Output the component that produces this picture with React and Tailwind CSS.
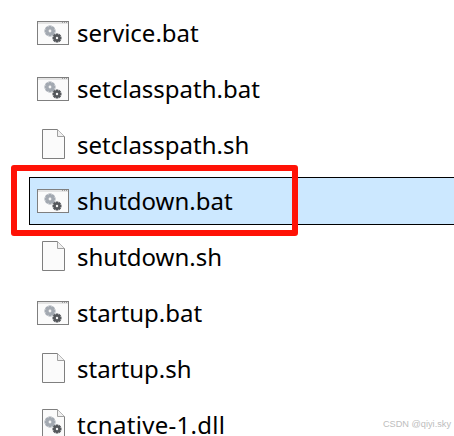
import React from 'react';

const Gear = ({ cx, cy, r, hole, teeth = 8, fill }) => {
  const bars = [];
  for (let i = 0; i < teeth / 2; i++) {
    bars.push(
      <rect
        key={i}
        x={cx - r * 0.3}
        y={cy - r}
        width={r * 0.6}
        height={r * 2}
        fill={fill}
        transform={`rotate(${(i * 360) / teeth} ${cx} ${cy})`}
      />
    );
  }
  return (
    <g>
      {bars}
      <circle cx={cx} cy={cy} r={r * 0.72} fill={fill} />
      <circle cx={cx} cy={cy} r={hole} fill="#f4f4f4" />
    </g>
  );
};

const AppIcon = () => (
  <svg width="32" height="24" viewBox="0 0 32 24" className="shrink-0">
    <rect x="0.5" y="0.5" width="31" height="23" fill="#fbfbfb" stroke="#7f7f7f" />
    <rect x="1" y="1" width="30" height="2" fill="#e4e4e4" />
    <rect x="25" y="1" width="1" height="1" fill="#9a9a9a" />
    <rect x="27" y="1" width="1" height="1" fill="#9a9a9a" />
    <rect x="29" y="1" width="1" height="1" fill="#9a9a9a" />
    <Gear cx={13} cy={10} r={5.5} hole={1.4} fill="#a3a9b1" />
    <Gear cx={20} cy={17} r={4.5} hole={1.2} fill="#55585c" />
  </svg>
);

const DocIcon = ({ gears }) => (
  <svg width="23" height="30" viewBox="0 0 23 30" className="ml-[5px] mb-[2px] shrink-0">
    <path d="M0.5 0.5H15.5L22.5 7.5V29.5H0.5Z" fill="#fbfbfb" stroke="#7f7f7f" />
    <path d="M15.5 0.5V7.5H22.5" fill="#f0f0f0" stroke="#a0a0a0" />
    {gears && <Gear cx={8} cy={13} r={5.5} hole={1.4} fill="#a3a9b1" />}
    {gears && <Gear cx={15} cy={20} r={4.5} hole={1.2} fill="#55585c" />}
  </svg>
);

const files = [
  { name: 'service.bat', icon: 'app' },
  { name: 'setclasspath.bat', icon: 'app' },
  { name: 'setclasspath.sh', icon: 'doc' },
  { name: 'shutdown.bat', icon: 'app', selected: true },
  { name: 'shutdown.sh', icon: 'doc' },
  { name: 'startup.bat', icon: 'app' },
  { name: 'startup.sh', icon: 'doc' },
  { name: 'tcnative-1.dll', icon: 'dll' },
];

const App = () => {
  return (
    <div className="relative h-[436px] w-[454px] overflow-hidden bg-white font-['Noto_Sans',sans-serif]">
      <div className="flex flex-col gap-2 pl-[29px] pt-[9px]">
        {files.map((f) => (
          <div
            key={f.name}
            className={`flex h-12 shrink-0 items-center border-y border-l pl-[7px] ${
              f.selected ? 'border-black bg-[#cce8ff]' : 'border-transparent'
            }`}
          >
            <div className="flex w-[32px] shrink-0 items-center">
              {f.icon === 'app' && <AppIcon />}
              {f.icon === 'doc' && <DocIcon />}
              {f.icon === 'dll' && <DocIcon gears />}
            </div>
            <span
              className={`ml-2 text-2xl leading-none text-black ${
                f.icon === 'dll' ? 'tracking-[0.3px]' : ''
              }`}
            >
              {f.name}
            </span>
          </div>
        ))}
      </div>
      <div className="absolute left-[11px] top-[165px] h-[71px] w-[287px] rounded-[3px] border-[6px] border-[#ff1206]" />
      <span className="absolute right-[3px] top-[420px] font-['Liberation_Sans',sans-serif] text-[9.2px] leading-none text-[#bdbdbd]">
        CSDN @qiyi.sky
      </span>
    </div>
  );
};

export default App;
